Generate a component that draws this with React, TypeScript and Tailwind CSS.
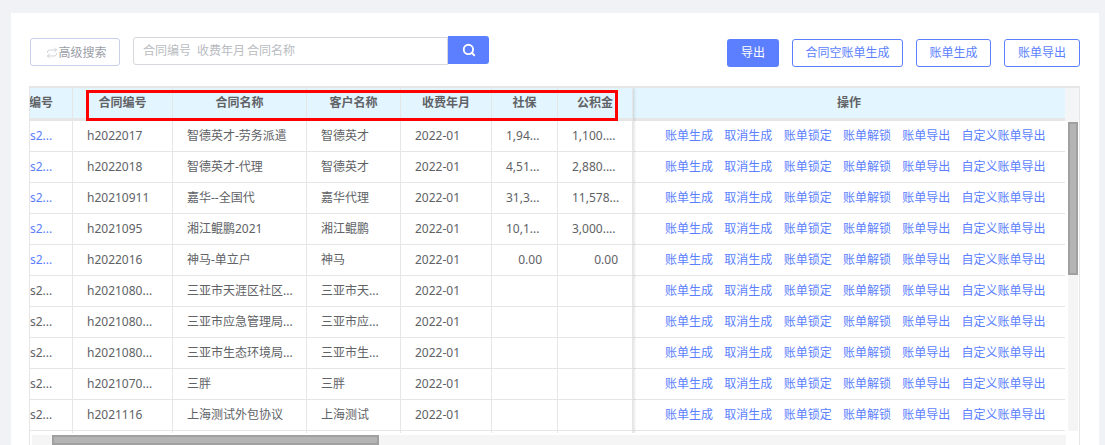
import { Repeat, Search } from "lucide-react";

const font = { fontFamily: '"Noto Sans","Noto Sans CJK SC",sans-serif' };

const rows: string[][] = [
  ["s2...", "h2022017", "智德英才-劳务派遣", "智德英才", "2022-01", "1,94...", "1,100...."],
  ["s2...", "h2022018", "智德英才-代理", "智德英才", "2022-01", "4,51...", "2,880...."],
  ["s2...", "h20210911", "嘉华--全国代", "嘉华代理", "2022-01", "31,3...", "11,578..."],
  ["s2...", "h2021095", "湘江鲲鹏2021", "湘江鲲鹏", "2022-01", "10,1...", "3,000...."],
  ["s2...", "h2022016", "神马-单立户", "神马", "2022-01", "0.00", "0.00"],
  ["s2...", "h2021080...", "三亚市天涯区社区...", "三亚市天...", "2022-01", "", ""],
  ["s2...", "h2021080...", "三亚市应急管理局...", "三亚市应...", "2022-01", "", ""],
  ["s2...", "h2021080...", "三亚市生态环境局...", "三亚市生...", "2022-01", "", ""],
  ["s2...", "h2021070...", "三胖", "三胖", "2022-01", "", ""],
  ["s2...", "h2021116", "上海测试外包协议", "上海测试", "2022-01", "", ""],
  ["", "", "", "", "", "", ""],
];

const widths = ["w-[43px]", "w-[100px]", "w-[134px]", "w-[94px]", "w-[91px]", "w-[66px]", "w-[75px]"];
const headers = ["编号", "合同编号", "合同名称", "客户名称", "收费年月", "社保", "公积金"];
const actions = ["账单生成", "取消生成", "账单锁定", "账单解锁", "账单导出", "自定义账单导出"];

function cellClass(c: string, i: number, ri: number) {
  if (i === 0) return ri < 5 ? "text-[#5c7fff]" : "";
  if (i === 5 && !c.includes("...")) return "justify-end pr-[15px]";
  if (i === 6 && !c.includes("...")) return "justify-end pr-[14px]";
  return "pl-[14px]";
}

export default function App() {
  return (
    <div style={font} className="w-[1105px] h-[445px] overflow-hidden bg-[#f0f2f5] pt-[13px] pl-[11px] pr-[6px] text-[12px] text-[#606266]">
      <div className="relative h-[432px] bg-white pl-[18px] pr-[19px]">
        <div className="flex h-[73px] items-start">
          <button className="ml-[1px] mt-[25px] flex h-[28px] w-[90px] items-center justify-center rounded-[3px] border border-[#c9cfe8] pl-[3px] pt-[1px] text-[12px] text-[#9a9da6]">
            <Repeat size={12} strokeWidth={1.2} className="text-[#b5b8c0]" />
            <span>高级搜索</span>
          </button>
          <div className="ml-[13px] mt-[24px] flex h-[28px] w-[315px] items-center rounded-l-[3px] border border-[#d5d7dc] pb-[1px] pl-[9px] text-[#b9bcc2]">
            <span>合同编号</span>
            <span className="ml-[6px]">收费年月</span>
            <span className="ml-[2px]">合同名称</span>
          </div>
          <button className="mt-[23px] flex h-[28px] w-[41px] items-center justify-center rounded-r-[3px] bg-[#5c7fff] text-white">
            <Search size={14} strokeWidth={3.2} />
          </button>
          <div className="ml-auto mt-[26px] flex gap-[13px]">
            <button className="h-[28px] w-[52px] rounded-[3px] bg-[#5c7fff] text-white">导出</button>
            <button className="h-[28px] w-[111px] rounded-[3px] border border-[#5c7fff] text-[#5c7fff]">合同空账单生成</button>
            <button className="h-[28px] w-[75px] rounded-[3px] border border-[#5c7fff] text-[#5c7fff]">账单生成</button>
            <button className="h-[28px] w-[76px] rounded-[3px] border border-[#5c7fff] text-[#5c7fff]">账单导出</button>
          </div>
        </div>

        <div className="flex h-[359px] overflow-hidden border-l border-t-2 border-[#e6e6e6]">
          <div className="relative z-10 w-[603px] shrink-0 shadow-[1px_0_3px_rgba(0,0,0,0.15)]">
            <div className="flex h-[33px] border-b-[3px] border-[#e6e6e6] bg-[#e3f5fe] font-bold">
              {headers.map((h, i) => (
                <div
                  key={h}
                  className={`${widths[i]} flex items-center whitespace-nowrap border-r border-[#e6e6e6] ${
                    i === 0 || i === 6 ? "justify-end pr-[19px]" : "justify-center"
                  }`}
                >
                  {h}
                </div>
              ))}
            </div>
            {rows.map((r, ri) => (
              <div key={ri} className="flex h-[31px] border-b border-[#e6e6e6]">
                {r.map((c, i) => (
                  <div
                    key={i}
                    className={`${widths[i]} flex items-center overflow-hidden whitespace-nowrap border-r border-[#e6e6e6] ${cellClass(c, i, ri)}`}
                  >
                    {c}
                  </div>
                ))}
              </div>
            ))}
          </div>

          <div className="w-[432px] shrink-0">
            <div className="flex h-[33px] items-center justify-center border-b-[3px] border-[#e6e6e6] bg-[#e3f5fe] font-bold">操作</div>
            {rows.map((_, ri) => (
              <div key={ri} className="flex h-[31px] items-center gap-[11.3px] whitespace-nowrap border-b border-[#e6e6e6] pl-[32px] text-[#5c7fff]">
                {ri < 10 && actions.map((a) => <span key={a}>{a}</span>)}
              </div>
            ))}
          </div>

          <div className="flex w-[15px] shrink-0 flex-col border-r border-[#e6e6e6]">
            <div className="h-[33px] shrink-0 bg-[#f4f5f7]" />
            <div className="h-[310px] pl-[3px] pr-[1px]">
              <div className="h-full bg-[#f5f5f5] pt-[1px]">
                <div className="h-[153px] w-full border-2 border-[#a0a0a0] bg-[#b4b4b4]" />
              </div>
            </div>
          </div>
        </div>

        <div className="absolute bottom-0 left-[19px] right-[33px] z-20 h-[12px] bg-white pl-[2px] pt-[2px]">
          <div className="h-[10px] bg-[#f5f5f5] pl-[20px]">
            <div className="h-[10px] w-[327px] border-2 border-[#a0a0a0] bg-[#b4b4b4]" />
          </div>
        </div>

        <div className="absolute left-[75px] top-[77px] z-30 h-[31px] w-[532px] border-[3px] border-[#ff0000]" />
      </div>
    </div>
  );
}
